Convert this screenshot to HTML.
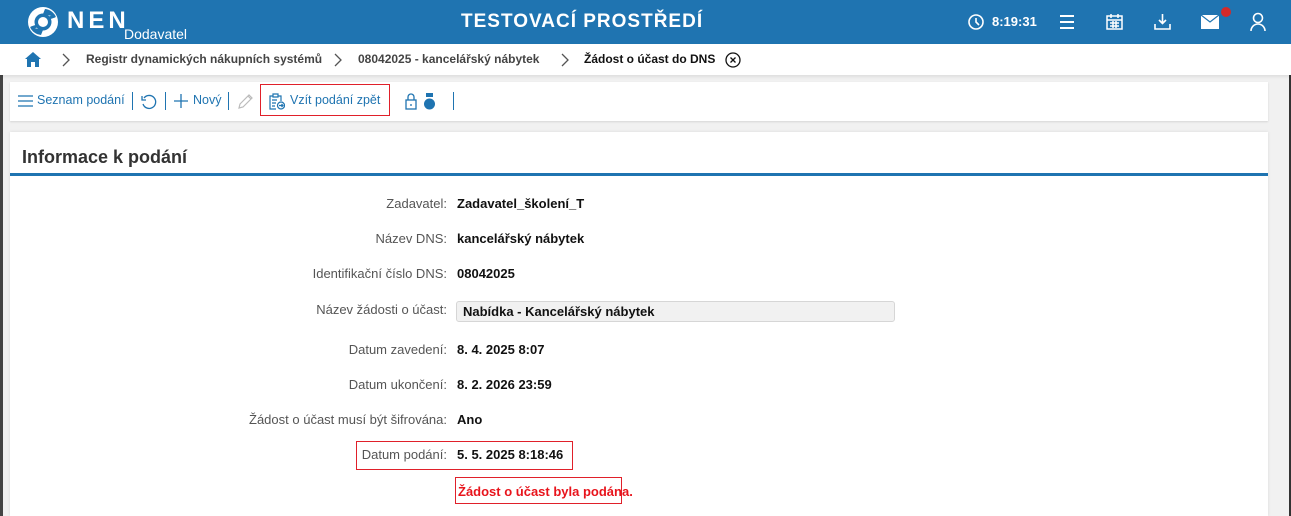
<!DOCTYPE html>
<html><head><meta charset="utf-8"><style>
*{margin:0;padding:0;box-sizing:border-box}
body{width:1291px;height:516px;overflow:hidden;background:#f1f1f1;font-family:"Liberation Sans",Arial,sans-serif;position:relative}
.a{position:absolute}
.hdr{left:0;top:0;width:1291px;height:44px;background:#1f74b1;color:#fff}
.bc{left:0;top:44px;width:1291px;height:31px;background:#fff;box-shadow:0 2px 3px rgba(0,0,0,.08)}
.bc span{position:absolute;top:8px;font-size:12px;font-weight:bold;color:#444;white-space:nowrap}
.tb{left:10px;top:82px;width:1258px;height:39px;background:#fff;box-shadow:0 1px 2px rgba(0,0,0,.12)}
.tb .t{position:absolute;top:11px;font-size:12.5px;color:#1f74b1;white-space:nowrap}
.sep{position:absolute;top:10px;width:1px;height:18px;background:#1f74b1}
.card{left:10px;top:132px;width:1258px;height:384px;background:#fff;box-shadow:0 0 3px rgba(0,0,0,.1)}
.rows{left:0;top:0;width:1291px;height:516px}
.lbl{position:absolute;right:844px;font-size:13px;color:#555;white-space:nowrap;text-align:right}
.val{position:absolute;left:457px;font-size:13px;font-weight:bold;color:#111;white-space:nowrap}
.rb{position:absolute;background:transparent;box-shadow:inset 0 0 0 1px #e0202a}
</style></head><body>
<div class="a" style="left:0;top:75px;width:3px;height:441px;background:#444"></div>
<div class="a" style="left:1289px;top:75px;width:2px;height:441px;background:#333"></div>
<div class="a hdr">
 <svg class="a" style="left:27px;top:6px" width="32" height="32" viewBox="0 0 32 32"><circle cx="16" cy="16" r="15" fill="#fff"/><circle cx="16" cy="16" r="8.5" fill="#1f74b1"/><path d="M4 22 L10 20 M28 10 L22 12" stroke="#1f74b1" stroke-width="3"/><circle cx="16" cy="16" r="5" fill="#fff"/><path d="M3 21 A13 13 0 0 0 14 29 L16 24 Z" fill="#1f74b1"/><path d="M29 11 A13 13 0 0 0 18 3 L16 8 Z" fill="#1f74b1"/></svg>
 <div class="a" style="left:67px;top:7px;font-size:24px;font-weight:bold;letter-spacing:4px">NEN</div>
 <div class="a" style="left:124px;top:26px;font-size:14px">Dodavatel</div>
 <div class="a" style="left:461px;top:11px;font-size:19px;font-weight:bold;letter-spacing:1px">TESTOVACÍ PROSTŘEDÍ</div>
 <svg class="a" style="left:968px;top:14px" width="16" height="16" viewBox="0 0 16 16" fill="none" stroke="#fff" stroke-width="1.6"><circle cx="8" cy="8" r="7"/><path d="M8 4v4l3 3"/></svg>
 <div class="a" style="left:992px;top:14px;font-size:13px;font-weight:bold">8:19:31</div>
 <svg class="a" style="left:1059px;top:14px" width="16" height="16" viewBox="0 0 16 16" stroke="#fff" stroke-width="2"><path d="M1 2h14M1 8h14M1 14h14"/></svg>
 <svg class="a" style="left:1106px;top:13px" width="17" height="17" viewBox="0 0 17 17" fill="none" stroke="#fff" stroke-width="1.5"><rect x="1" y="3" width="15" height="13"/><path d="M5 1v4M12 1v4M1 7h15M4 10h9M4 13h9M7 8v7M10 8v7"/></svg>
 <svg class="a" style="left:1154px;top:13px" width="17" height="17" viewBox="0 0 17 17" fill="none" stroke="#fff" stroke-width="1.6"><path d="M8.5 1v9M5 7l3.5 3.5L12 7M1 11v5h15v-5"/></svg>
 <svg class="a" style="left:1201px;top:15px" width="18" height="14" viewBox="0 0 18 14"><rect width="18" height="14" fill="#fff"/><path d="M0 0l9 7 9-7" fill="none" stroke="#1f74b1" stroke-width="1.2"/></svg>
 <div class="a" style="left:1221px;top:7px;width:10px;height:10px;border-radius:50%;background:#d42a2a"></div>
 <svg class="a" style="left:1250px;top:12px" width="16" height="19" viewBox="0 0 16 19" fill="none" stroke="#fff" stroke-width="1.6"><circle cx="8" cy="6" r="4.5"/><path d="M1 19a7 7 0 0 1 14 0"/></svg>
</div>
<div class="a bc">
 <svg class="a" style="left:24px;top:7px" width="18" height="17" viewBox="0 0 18 17"><path d="M9 1L1 8h2v8h4v-5h4v5h4V8h2z" fill="#1f74b1"/></svg>
 <svg class="a" style="left:62px;top:9px" width="8" height="14" viewBox="0 0 8 14" fill="none" stroke="#555" stroke-width="1.3"><path d="M1 1l6 6-6 6"/></svg>
 <span style="left:86px">Registr dynamických nákupních systémů</span>
 <svg class="a" style="left:334px;top:9px" width="8" height="14" viewBox="0 0 8 14" fill="none" stroke="#555" stroke-width="1.3"><path d="M1 1l6 6-6 6"/></svg>
 <span style="left:358px">08042025 - kancelářský nábytek</span>
 <svg class="a" style="left:561px;top:9px" width="8" height="14" viewBox="0 0 8 14" fill="none" stroke="#555" stroke-width="1.3"><path d="M1 1l6 6-6 6"/></svg>
 <span style="left:584px;color:#111">Žádost o účast do DNS</span>
 <svg class="a" style="left:725px;top:8px" width="16" height="16" viewBox="0 0 16 16" fill="none" stroke="#111" stroke-width="1.3"><circle cx="8" cy="8" r="7"/><path d="M5.5 5.5l5 5M10.5 5.5l-5 5"/></svg>
</div>
<div class="a tb">
 <svg class="a" style="left:8px;top:13px" width="15" height="12" viewBox="0 0 15 12" stroke="#1f74b1" stroke-width="1.3"><path d="M0 1h15M0 6h15M0 11h15"/></svg>
 <span class="t" style="left:27px">Seznam podání</span>
 <div class="sep" style="left:122px"></div>
 <svg class="a" style="left:131px;top:12px" width="16" height="16" viewBox="0 0 16 16" fill="none" stroke="#1f74b1" stroke-width="1.3"><path d="M3 4A6.5 6.5 0 1 1 2 10"/><path d="M1 2v4h4" /></svg>
 <div class="sep" style="left:155px"></div>
 <svg class="a" style="left:164px;top:12px" width="14" height="14" viewBox="0 0 14 14" stroke="#1f74b1" stroke-width="1.3"><path d="M7 0v14M0 7h14"/></svg>
 <span class="t" style="left:183px">Nový</span>
 <div class="sep" style="left:218px"></div>
 <svg class="a" style="left:227px;top:11px" width="17" height="17" viewBox="0 0 17 17" fill="none" stroke="#bbb" stroke-width="1.2"><path d="M2 15l1-4 9-9 3 3-9 9z M11 3l3 3"/></svg>
 <div class="rb" style="left:250px;top:2px;width:130px;height:32px"></div>
 <svg class="a" style="left:259px;top:11px" width="16" height="17" viewBox="0 0 16 17" fill="none" stroke="#1f74b1" stroke-width="1.2"><path d="M4 3H1v13h6M9 3h3v5M4 1h5v3H4z M3 7h5M3 10h4M3 13h3"/><circle cx="12" cy="12.5" r="3.5"/><path d="M10 12.5h4M12.5 11l1.5 1.5-1.5 1.5"/></svg>
 <span class="t" style="left:280px">Vzít podání zpět</span>
 <svg class="a" style="left:395px;top:11px" width="12" height="17" viewBox="0 0 12 17" fill="none" stroke="#1f74b1" stroke-width="1.3"><path d="M3 7V4a3 3 0 0 1 6 0v3"/><rect x="1" y="7" width="10" height="9"/><path d="M6 11v2"/></svg>
 <svg class="a" style="left:414px;top:11px" width="11" height="17" viewBox="0 0 11 17"><rect x="2" y="0" width="7" height="4" fill="#1f74b1"/><circle cx="5.5" cy="11" r="5.5" fill="#1f74b1"/></svg>
 <div class="sep" style="left:443px"></div>
</div>
<div class="a card">
 <div class="a" style="left:12px;top:15px;font-size:18px;font-weight:bold;color:#333">Informace k podání</div>
 <div class="a" style="left:0;top:41px;width:1258px;height:3px;background:#1f74b1"></div>
</div>
<div class="a rows">
 <div class="lbl" style="top:196px">Zadavatel:</div><div class="val" style="top:196px">Zadavatel_školení_T</div>
 <div class="lbl" style="top:231px">Název DNS:</div><div class="val" style="top:231px">kancelářský nábytek</div>
 <div class="lbl" style="top:266px">Identifikační číslo DNS:</div><div class="val" style="top:266px">08042025</div>
 <div class="lbl" style="top:302px">Název žádosti o účast:</div>
 <div class="a" style="left:456px;top:301px;width:439px;height:21px;background:#f1f1f1;border:1px solid #d6d6d6;border-radius:3px"></div>
 <div class="val" style="left:463px;top:304px">Nabídka - Kancelářský nábytek</div>
 <div class="lbl" style="top:342px">Datum zavedení:</div><div class="val" style="top:342px">8. 4. 2025 8:07</div>
 <div class="lbl" style="top:377px">Datum ukončení:</div><div class="val" style="top:377px">8. 2. 2026 23:59</div>
 <div class="lbl" style="top:412px">Žádost o účast musí být šifrována:</div><div class="val" style="top:412px">Ano</div>
 <div class="rb" style="left:356px;top:441px;width:217px;height:29px"></div>
 <div class="lbl" style="top:447px">Datum podání:</div><div class="val" style="top:447px">5. 5. 2025 8:18:46</div>
 <div class="rb" style="left:455px;top:477px;width:167px;height:27px"></div>
 <div class="val" style="left:458px;top:484px;color:#e8141c">Žádost o účast byla podána.</div>
</div>
</body></html>
